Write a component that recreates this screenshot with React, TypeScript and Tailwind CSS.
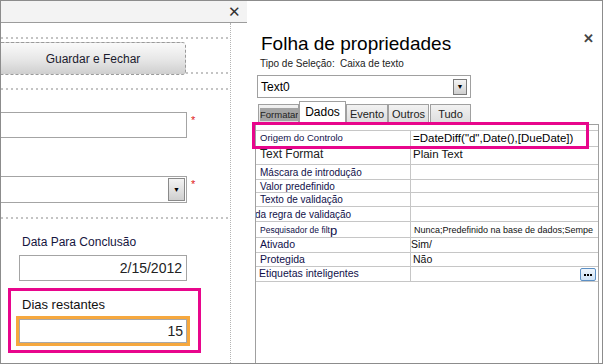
import React from "react";

const dotsH = "h-[2px] bg-[linear-gradient(to_right,#c4c4c4_50%,transparent_50%)] bg-[length:5px_2px] bg-repeat-x";

function Row({ h, label, value, labelCls = "", valueCls = "", extra }: { h: number; label: React.ReactNode; value?: React.ReactNode; labelCls?: string; valueCls?: string; extra?: React.ReactNode }) {
  return (
    <div className="flex w-full min-w-0 border-b border-[#c6c6c6] overflow-hidden" style={{ height: h }}>
      <div className={"w-[155px] shrink-0 border-r border-[#c6c6c6] flex items-center whitespace-nowrap overflow-hidden text-[#10104a] " + labelCls}>{label}</div>
      <div className={"flex-1 min-w-0 flex items-center whitespace-nowrap overflow-hidden text-[#111] relative " + valueCls}>{value}{extra}</div>
    </div>
  );
}

export default function App() {
  return (
    <div className="w-[603px] h-[364px] border border-[#8c8c8c] bg-white flex overflow-hidden" style={{ fontFamily: '"Liberation Sans", Arial, sans-serif' }}>
      {/* Left design pane */}
      <div className="w-[246px] shrink-0 flex flex-col">
        <div className="h-[22px] shrink-0 bg-[#f3f3f3] border-b border-[#9c9c9c] flex items-center justify-end pr-[6px]">
          <span className="text-[15px] leading-none text-[#333]">✕</span>
        </div>
        <div className="flex-1 flex relative">
          <div className="w-[230px] shrink-0 flex flex-col border-r border-dotted border-[#b4b4b4]">
            <div className={"mt-[14px] w-[229px] " + dotsH} />
            <div className="mt-[3px] flex items-start">
              <div className="w-[185px] h-[33px] rounded-r-[4px] border border-dashed border-l-0 border-[#9a9a9a] bg-[linear-gradient(to_bottom,#fafafa,#e6e6e6_55%,#cfcfcf)] flex items-center justify-center text-[12px] text-[#1b1b2e]">
                Guardar e Fechar
              </div>
              <div className="flex-1 flex flex-col pt-[30px]">
                <div className={"w-full " + dotsH} />
              </div>
            </div>
            <div className={"mt-[13px] w-[229px] " + dotsH} />
            <div className="mt-[22px] flex items-start">
              <div className="w-[186px] h-[26px] border border-l-0 border-[#a4a4a4] bg-white" />
              <span className="ml-[4px] text-[#e02020] text-[11px] leading-none mt-[3px]">*</span>
            </div>
            <div className="mt-[38px] flex items-start">
              <div className="w-[186px] h-[27px] border border-l-0 border-[#a4a4a4] bg-white flex justify-end items-stretch p-[1px]">
                <div className="w-[17px] border border-[#8a8a8a] bg-[linear-gradient(to_bottom,#f4f4f4,#cfcfcf)] flex items-center justify-center">
                  <span className="text-[7px] leading-none text-black">▼</span>
                </div>
              </div>
              <span className="ml-[4px] text-[#e02020] text-[11px] leading-none mt-[3px]">*</span>
            </div>
            <div className={"mt-[14px] w-[229px] " + dotsH} />
            <div className="mt-[16px] pl-[21px] text-[12px] leading-[14px] text-[#151540]">Data Para Conclusão</div>
            <div className="mt-[6px] ml-[18px] w-[168px] h-[26px] border border-[#a4a4a4] flex items-center justify-end pr-[4px] text-[14px] text-[#222]">2/15/2012</div>
            <div className="mt-[7px] ml-[7px] w-[193px] h-[65px] border-[3px] border-[#e8068c] flex flex-col">
              <div className="mt-[6px] ml-[11px] text-[13px] leading-[15px] text-[#111]">Dias restantes</div>
              <div className="mt-[4px] ml-[5px] w-[174px] h-[30px] border-[3px] border-[#f6a83e] p-0">
                <div className="w-full h-full border border-[#a8a8a8] flex items-center justify-end pr-[3px] text-[14px] text-[#222]">15</div>
              </div>
            </div>
          </div>
          <div className="flex-1" />
        </div>
      </div>

      {/* Property sheet */}
      <div className="flex-1 min-w-0 flex flex-col relative">
        <div className="flex items-start justify-between pt-[31px] pl-[14px] pr-[8px]">
          <div className="text-[19px] leading-[24px] text-black">Folha de propriedades</div>
          <span className="text-[13px] font-bold text-[#444] leading-none mt-[0px]">✕</span>
        </div>
        <div className="flex pl-[13px] mt-[2px] text-[10px] leading-[12px] text-[#222]">
          <span className="w-[80px]">Tipo de Seleção:</span>
          <span>Caixa de texto</span>
        </div>
        <div className="ml-[10px] mt-[5px] w-[214px] h-[23px] border border-[#a0a0a0] flex items-center justify-between pl-[3px] pr-[3px]">
          <span className="text-[12px] text-black">Text0</span>
          <div className="w-[14px] h-[16px] border border-[#7a7a7a] bg-[linear-gradient(to_bottom,#f4f4f4,#cfcfcf)] flex items-center justify-center">
            <span className="text-[7px] leading-none">▼</span>
          </div>
        </div>
        <div className="ml-[11px] mt-[3px] flex items-end h-[23px] text-[12px] whitespace-nowrap">
          <div className="w-[41px] h-[20px] border border-b-0 border-[#a0a0a0] bg-[linear-gradient(to_bottom,#f2f2f2,#dcdcdc)] flex items-center pl-[1px] overflow-hidden">
            <span className="bg-[#a4a4a4] text-[#222] leading-[13px] text-[9.5px] pr-[1px]">Formatar</span>
          </div>
          <div className="w-[47px] h-[23px] border border-b-0 border-[#a0a0a0] bg-white flex items-center justify-center text-black pb-[2px]">Dados</div>
          <div className="w-[42px] h-[20px] border border-b-0 border-[#a0a0a0] bg-[linear-gradient(to_bottom,#f2f2f2,#dcdcdc)] flex items-center justify-center text-[#222] text-[11px] overflow-hidden">Evento</div>
          <div className="w-[41px] h-[20px] border border-b-0 border-[#a0a0a0] bg-[linear-gradient(to_bottom,#f2f2f2,#dcdcdc)] flex items-center justify-center text-[#222] text-[11px] overflow-hidden">Outros</div>
          <div className="w-[41px] h-[20px] ml-[1px] border border-b-0 border-[#a0a0a0] bg-[linear-gradient(to_bottom,#f2f2f2,#dcdcdc)] flex items-center justify-center text-[#222] text-[11px] overflow-hidden">Tudo</div>
        </div>
        <div className="ml-[8px] mr-[3px] flex-1 min-w-0 border border-b-0 border-[#a0a0a0] flex flex-col pt-[5px]">
          <div className="border-t border-[#c6c6c6] flex flex-col min-w-0">
            <Row h={16} label={<span className="pl-[4px] text-[9.5px]">Origem do Controlo</span>} value={<span className="pl-[2px] text-[11.5px] text-black">=DateDiff("d",Date(),[DueDate])</span>} />
            <Row h={18} labelCls="items-start" valueCls="items-start" label={<span className="pl-[4px] text-[12px] leading-[14px] text-[#222]">Text Format</span>} value={<span className="pl-[2px] text-[11.5px] leading-[14px]">Plain Text</span>} />
            <Row h={15} label={<span className="pl-[4px] text-[10px]">Máscara de introdução</span>} />
            <Row h={13} label={<span className="pl-[4px] text-[10px]">Valor predefinido</span>} />
            <Row h={14} label={<span className="pl-[4px] text-[10px]">Texto de validação</span>} />
            <Row h={15} label={<span className="pl-0 text-[10px] -ml-[1px]">da regra de validação</span>} />
            <Row h={16} labelCls="items-start" label={<span className="pl-[4px] text-[8.5px] leading-[10px]">Pesquisador de filt<span className="inline-block text-[13px] leading-[13px] translate-y-[2px]">p</span></span>} value={<span className="pl-[3px] text-[9px] mt-[3px]">Nunca;Predefinido na base de dados;Sempe</span>} />
            <Row h={15} label={<span className="pl-[4px] text-[10.5px]">Ativado</span>} value={<span className="text-[10.5px]">Sim/</span>} />
            <Row h={14} label={<span className="pl-[4px] text-[10.5px]">Protegida</span>} value={<span className="pl-[2px] text-[10.5px]">Não</span>} />
            <Row h={15} label={<span className="pl-[3px] text-[10.5px]">Etiquetas inteligentes</span>} value={<span />} extra={
              <div className="absolute right-[2px] top-[1px] w-[16px] h-[13px] rounded-[2px] border border-[#5b8fc4] bg-[linear-gradient(to_bottom,#eef5fc,#cfe2f5)] flex items-center justify-center gap-[1px]">
                <span className="w-[2px] h-[2px] bg-black" /><span className="w-[2px] h-[2px] bg-black" /><span className="w-[2px] h-[2px] bg-black" />
              </div>
            } />
          </div>
        </div>
        <div className="absolute left-[5px] top-[121px] w-[337px] h-[27px] border-[3px] border-[#e8068c] pointer-events-none" />
      </div>
    </div>
  );
}
